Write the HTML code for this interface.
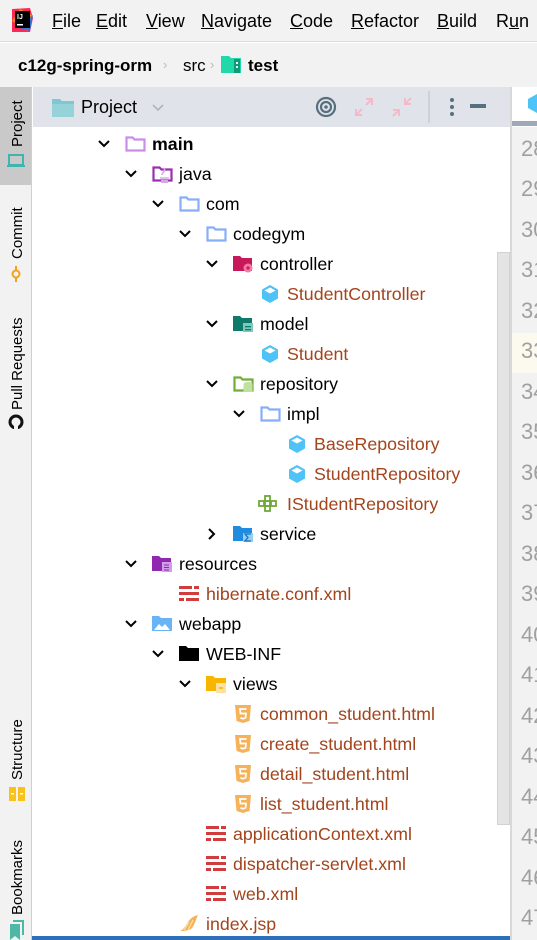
<!DOCTYPE html>
<html><head><meta charset="utf-8">
<style>
*{margin:0;padding:0;box-sizing:border-box}
body{width:537px;height:940px;overflow:hidden;background:#fff;font-family:"Liberation Sans",sans-serif;position:relative;color:#000}
.abs{position:absolute}
.menu{left:0;top:0;width:537px;height:42px;background:#f2f2f2;border-bottom:1px solid #dcdcdc}
.menu span{position:absolute;top:11px;font-size:18px;color:#000}
.menu u{text-decoration:underline}
.crumb{left:0;top:43px;width:537px;height:44px;background:#f2f2f2}
.side{left:0;top:87px;width:32px;height:853px;background:#f2f2f2;border-right:1px solid #d0d0d0}
.vt{position:absolute;transform:rotate(-90deg);transform-origin:left top;font-size:15px;white-space:nowrap;color:#000}
.hdr{left:33px;top:87px;width:477px;height:40px;background:#e0e3ea}
.row{position:absolute;height:30px;font-size:17.8px;line-height:30px;white-space:nowrap}
.row svg{position:absolute;top:5px}
.chev{position:absolute;top:0;font-size:15px}
.f{color:#a2441c}
.gut{left:511px;top:127px;width:26px;height:813px;background:#f2f2f2;border-left:1px solid #d8d8d8;overflow:hidden}
.gut div{position:absolute;left:9px;font-size:22px;color:#a0a0a0}
</style></head><body>
<div class="abs menu">
  <svg class="abs" style="left:10px;top:7px" width="24" height="26" viewBox="0 0 24 26"><path d="M2 2l18 -1 3 10-3 14-18 0z" fill="#fe2857"/><path d="M2 14l8-12 12 6-4 16z" fill="#fc801d"/><path d="M6 20l14 4 3-16z" fill="#087cfa" opacity=".8"/><rect x="5" y="4" width="15" height="17" fill="#000"/><text x="7" y="12" font-size="7" fill="#fff" font-family="Liberation Sans" font-weight="bold">IJ</text><rect x="7" y="17" width="6" height="1.5" fill="#fff"/></svg>
  <span style="left:52px"><u>F</u>ile</span>
  <span style="left:96px"><u>E</u>dit</span>
  <span style="left:146px"><u>V</u>iew</span>
  <span style="left:201px"><u>N</u>avigate</span>
  <span style="left:290px"><u>C</u>ode</span>
  <span style="left:351px"><u>R</u>efactor</span>
  <span style="left:437px"><u>B</u>uild</span>
  <span style="left:496px">R<u>u</u>n</span>
</div>
<div class="abs crumb">
  <span class="abs" style="left:18px;top:13px;font-size:17px;font-weight:bold">c12g-spring-orm</span>
  <span class="abs" style="left:163px;top:14px;font-size:13px;color:#bbb">›</span>
  <span class="abs" style="left:183px;top:13px;font-size:17px">src</span>
  <span class="abs" style="left:210px;top:14px;font-size:13px;color:#bbb">›</span>
  <svg class="abs" style="left:221px;top:12px" width="22" height="20" viewBox="0 0 22 20"><path d="M0 1h8l2 2h10v15H0z" fill="#21d8a8"/><rect x="13" y="4" width="6" height="14" fill="#0e9c78"/><rect x="15" y="7" width="2" height="2" fill="#fff"/><rect x="15" y="11" width="2" height="2" fill="#fff"/></svg>
  <span class="abs" style="left:248px;top:13px;font-size:17px;font-weight:bold">test</span>
</div>
<div class="abs side">
  <div class="abs" style="left:0;top:0;width:31px;height:98px;background:#c9c9c9"></div>
  <div class="vt" style="left:9px;top:60px">Project</div>
  <svg class="abs" style="left:7px;top:66px" width="18" height="16" viewBox="0 0 18 16"><rect x="2" y="2" width="14" height="10" fill="none" stroke="#3fb5b0" stroke-width="2"/><rect x="0" y="12" width="18" height="2" fill="#3fb5b0"/></svg>
  <div class="vt" style="left:9px;top:172px">Commit</div>
  <svg class="abs" style="left:9px;top:179px" width="14" height="16" viewBox="0 0 14 16"><circle cx="7" cy="8" r="3.5" fill="none" stroke="#f4a21c" stroke-width="2"/><path d="M7 0v4M7 12v4" stroke="#f4a21c" stroke-width="2"/></svg>
  <div class="vt" style="left:9px;top:323px">Pull Requests</div>
  <svg class="abs" style="left:8px;top:327px" width="16" height="16" viewBox="0 0 16 16"><circle cx="8" cy="8" r="6" fill="none" stroke="#111" stroke-width="3"/><rect x="6" y="12" width="4" height="4" fill="#f2f2f2"/></svg>
  <div class="vt" style="left:9px;top:693px">Structure</div>
  <svg class="abs" style="left:9px;top:700px" width="16" height="14" viewBox="0 0 16 14"><rect x="0" y="0" width="7" height="14" fill="#f9c21a"/><rect x="9" y="0" width="7" height="14" fill="#f9c21a"/><rect x="2" y="6" width="3" height="1.5" fill="#fff"/><rect x="11" y="6" width="3" height="1.5" fill="#fff"/></svg>
  <div class="vt" style="left:9px;top:828px">Bookmarks</div>
  <svg class="abs" style="left:8px;top:833px" width="18" height="20" viewBox="0 0 18 20"><path d="M2 4h10v16l-5-4-5 4z" fill="#4fb7a6"/><path d="M5 1h10v14" fill="none" stroke="#4fb7a6" stroke-width="2"/></svg>
</div>
<div class="abs hdr">
  <svg class="abs" style="left:18px;top:9px" width="24" height="22" viewBox="0 0 24 22"><path d="M1 3h8l2 2h12v16H1z" fill="#80c8cf"/><path d="M1 8h22v13H1z" fill="#95d3d9"/></svg>
  <span class="abs" style="left:48px;top:10px;font-size:18px">Project</span>
  <svg class="abs" style="left:118px;top:16px" width="14" height="9"><path d="M2 2l5 5 5-5" fill="none" stroke="#b0b4bb" stroke-width="1.6"/></svg>
  <svg class="abs" style="left:282px;top:9px" width="22" height="22" viewBox="0 0 22 22"><circle cx="11" cy="11" r="9" fill="none" stroke="#56707d" stroke-width="2.2"/><circle cx="11" cy="11" r="5" fill="none" stroke="#56707d" stroke-width="2.2"/><circle cx="11" cy="11" r="1.8" fill="#56707d"/></svg>
  <svg class="abs" style="left:320px;top:9px" width="22" height="22" viewBox="0 0 22 22"><path d="M13 3h6v6M19 3l-6 6M9 19H3v-6M3 19l6-6" fill="none" stroke="#f7b8c8" stroke-width="2"/></svg>
  <svg class="abs" style="left:358px;top:9px" width="22" height="22" viewBox="0 0 22 22"><path d="M14 2v6h6M14 8l6-6M8 20v-6H2M8 14l-6 6" fill="none" stroke="#f7b8c8" stroke-width="2"/></svg>
  <div class="abs" style="left:395px;top:4px;width:2px;height:32px;background:#cfd1d6"></div>
  <svg class="abs" style="left:416px;top:10px" width="6" height="20"><circle cx="3" cy="3" r="2" fill="#56707d"/><circle cx="3" cy="10" r="2" fill="#56707d"/><circle cx="3" cy="17" r="2" fill="#56707d"/></svg>
  <div class="abs" style="left:437px;top:17px;width:16px;height:4px;background:#56707d"></div>
</div>
<div class="abs" style="left:510px;top:87px;width:2px;height:853px;background:#d8d8d8"></div>
<div class="abs" style="left:512px;top:87px;width:25px;height:34px;background:#fff"></div>
<svg class="abs" style="left:526px;top:93px" width="11" height="20" viewBox="0 0 11 20"><path d="M11 1L2 6v9l9 5z" fill="#4dc3f7"/></svg>
<div class="abs" style="left:512px;top:121px;width:25px;height:5px;background:#a0a8b8"></div>
<div class="abs gut">
  <div class="abs" style="left:0;top:206px;width:26px;height:40px;background:#fcfaee"></div>
  <div style="top:9px">28</div><div style="top:49px">29</div><div style="top:90px">30</div><div style="top:130px">31</div><div style="top:171px">32</div><div style="top:211px">33</div><div style="top:252px">34</div><div style="top:292px">35</div><div style="top:333px">36</div><div style="top:373px">37</div><div style="top:414px">38</div><div style="top:454px">39</div><div style="top:495px">40</div><div style="top:535px">41</div><div style="top:576px">42</div><div style="top:616px">43</div><div style="top:657px">44</div><div style="top:697px">45</div><div style="top:738px">46</div><div style="top:778px">47</div>
</div>
<div class="abs" style="left:497px;top:252px;width:13px;height:573px;background:#e4e4e4;border:1px solid #d2d2d2"></div>
<div class="abs" style="left:32px;top:936px;width:478px;height:4px;background:#2d6fb8"></div>

<div id="tree">
<div class="row" style="top:129px;left:0;width:497px">
 <svg class="chev" style="left:97px;top:10px" width="14" height="10"><path d="M2 2l5 5 5-5" fill="none" stroke="#000" stroke-width="2"/></svg>
 <svg style="left:125px" width="21" height="20" viewBox="0 0 21 20"><path d="M1.5 3.5h6l2 2h10v11h-18z" fill="none" stroke="#c98ee8" stroke-width="2.2"/></svg>
 <span class="abs" style="left:152px;font-weight:bold">main</span></div>

<div class="row" style="top:159px;left:0;width:497px">
 <svg class="chev" style="left:124px;top:10px" width="14" height="10"><path d="M2 2l5 5 5-5" fill="none" stroke="#000" stroke-width="2"/></svg>
 <svg style="left:152px" width="21" height="20" viewBox="0 0 21 20"><path d="M1.5 3.5h6l2 2h10v11h-18z" fill="none" stroke="#9a2fb0" stroke-width="2.2"/><path d="M8 14h9M10 11c0-3 4-3 2-7" fill="none" stroke="#d8a8e6" stroke-width="1.6"/><rect x="9" y="16" width="7" height="3" fill="#d8a8e6"/></svg>
 <span class="abs" style="left:179px">java</span></div>

<div class="row" style="top:189px;left:0;width:497px">
 <svg class="chev" style="left:151px;top:10px" width="14" height="10"><path d="M2 2l5 5 5-5" fill="none" stroke="#000" stroke-width="2"/></svg>
 <svg style="left:179px" width="21" height="20" viewBox="0 0 21 20"><path d="M1.5 3.5h6l2 2h10v11h-18z" fill="none" stroke="#88aef8" stroke-width="2.2"/></svg>
 <span class="abs" style="left:206px">com</span></div>

<div class="row" style="top:219px;left:0;width:497px">
 <svg class="chev" style="left:178px;top:10px" width="14" height="10"><path d="M2 2l5 5 5-5" fill="none" stroke="#000" stroke-width="2"/></svg>
 <svg style="left:206px" width="21" height="20" viewBox="0 0 21 20"><path d="M1.5 3.5h6l2 2h10v11h-18z" fill="none" stroke="#88aef8" stroke-width="2.2"/></svg>
 <span class="abs" style="left:233px">codegym</span></div>

<div class="row" style="top:249px;left:0;width:497px">
 <svg class="chev" style="left:205px;top:10px" width="14" height="10"><path d="M2 2l5 5 5-5" fill="none" stroke="#000" stroke-width="2"/></svg>
 <svg style="left:233px" width="21" height="20" viewBox="0 0 21 20"><path d="M0 2h7l2 2h10v13H0z" fill="#c8185a"/><circle cx="15" cy="14" r="4.5" fill="#f27ba6"/><circle cx="15" cy="14" r="1.6" fill="#c8185a"/></svg>
 <span class="abs" style="left:260px">controller</span></div>

<div class="row" style="top:279px;left:0;width:497px">
 <svg style="left:260px" width="20" height="20" viewBox="0 0 20 20"><path d="M10 1l8 4.5v9L10 19l-8-4.5v-9z" fill="#4dc3f7"/><path d="M10 3.5l5.5 3L10 9.5 4.5 6.5z" fill="#fff"/></svg>
 <span class="abs f" style="left:287px">StudentController</span></div>

<div class="row" style="top:309px;left:0;width:497px">
 <svg class="chev" style="left:205px;top:10px" width="14" height="10"><path d="M2 2l5 5 5-5" fill="none" stroke="#000" stroke-width="2"/></svg>
 <svg style="left:233px" width="21" height="20" viewBox="0 0 21 20"><path d="M0 2h7l2 2h10v13H0z" fill="#0f7a6a"/><rect x="10" y="9" width="10" height="9" fill="#7dc9bb"/><rect x="12" y="12" width="6" height="1.3" fill="#0f7a6a"/><rect x="12" y="15" width="6" height="1.3" fill="#0f7a6a"/></svg>
 <span class="abs" style="left:260px">model</span></div>

<div class="row" style="top:339px;left:0;width:497px">
 <svg style="left:260px" width="20" height="20" viewBox="0 0 20 20"><path d="M10 1l8 4.5v9L10 19l-8-4.5v-9z" fill="#4dc3f7"/><path d="M10 3.5l5.5 3L10 9.5 4.5 6.5z" fill="#fff"/></svg>
 <span class="abs f" style="left:287px">Student</span></div>

<div class="row" style="top:369px;left:0;width:497px">
 <svg class="chev" style="left:205px;top:10px" width="14" height="10"><path d="M2 2l5 5 5-5" fill="none" stroke="#000" stroke-width="2"/></svg>
 <svg style="left:233px" width="21" height="20" viewBox="0 0 21 20"><path d="M1.5 3.5h6l2 2h10v11h-18z" fill="none" stroke="#72ac3a" stroke-width="2.2"/><ellipse cx="15" cy="10" rx="4.5" ry="2" fill="#c0e0a0"/><rect x="10.5" y="10" width="9" height="8" fill="#c0e0a0"/></svg>
 <span class="abs" style="left:260px">repository</span></div>

<div class="row" style="top:399px;left:0;width:497px">
 <svg class="chev" style="left:232px;top:10px" width="14" height="10"><path d="M2 2l5 5 5-5" fill="none" stroke="#000" stroke-width="2"/></svg>
 <svg style="left:260px" width="21" height="20" viewBox="0 0 21 20"><path d="M1.5 3.5h6l2 2h10v11h-18z" fill="none" stroke="#88aef8" stroke-width="2.2"/></svg>
 <span class="abs" style="left:287px">impl</span></div>

<div class="row" style="top:429px;left:0;width:497px">
 <svg style="left:287px" width="20" height="20" viewBox="0 0 20 20"><path d="M10 1l8 4.5v9L10 19l-8-4.5v-9z" fill="#4dc3f7"/><path d="M10 3.5l5.5 3L10 9.5 4.5 6.5z" fill="#fff"/></svg>
 <span class="abs f" style="left:314px">BaseRepository</span></div>

<div class="row" style="top:459px;left:0;width:497px">
 <svg style="left:287px" width="20" height="20" viewBox="0 0 20 20"><path d="M10 1l8 4.5v9L10 19l-8-4.5v-9z" fill="#4dc3f7"/><path d="M10 3.5l5.5 3L10 9.5 4.5 6.5z" fill="#fff"/></svg>
 <span class="abs f" style="left:314px">StudentRepository</span></div>

<div class="row" style="top:489px;left:0;width:497px">
 <svg style="left:258px" width="22" height="18" viewBox="0 0 22 18"><g fill="none" stroke="#6fa83a" stroke-width="1.8"><rect x="7" y="2" width="5" height="5"/><rect x="1" y="7" width="5" height="5"/><rect x="7" y="7" width="5" height="5"/><rect x="13" y="7" width="5" height="5"/><rect x="7" y="12" width="5" height="5"/></g></svg>
 <span class="abs f" style="left:287px">IStudentRepository</span></div>

<div class="row" style="top:519px;left:0;width:497px">
 <svg class="chev" style="left:207px;top:8px" width="10" height="14"><path d="M2 2l5 5-5 5" fill="none" stroke="#000" stroke-width="2"/></svg>
 <svg style="left:233px" width="21" height="20" viewBox="0 0 21 20"><path d="M0 2h7l2 2h10v13H0z" fill="#1f8ce0"/><rect x="10" y="9" width="10" height="9" fill="#8fd0f5"/><path d="M18 10h-6l3 3.5-3 3.5h6" fill="none" stroke="#1f6fb8" stroke-width="1.3"/></svg>
 <span class="abs" style="left:260px">service</span></div>

<div class="row" style="top:549px;left:0;width:497px">
 <svg class="chev" style="left:124px;top:10px" width="14" height="10"><path d="M2 2l5 5 5-5" fill="none" stroke="#000" stroke-width="2"/></svg>
 <svg style="left:152px" width="21" height="20" viewBox="0 0 21 20"><path d="M0 2h7l2 2h10v13H0z" fill="#8f2ab0"/><rect x="10" y="8" width="10" height="10" fill="#d39ce8"/><path d="M12 11h5M12 13.5h5M12 16h5" stroke="#8f2ab0" stroke-width="1"/></svg>
 <span class="abs" style="left:179px">resources</span></div>

<div class="row" style="top:579px;left:0;width:497px">
 <svg style="left:179px" width="21" height="20" viewBox="0 0 21 20"><g fill="#d13c3c"><rect x="0" y="2" width="13" height="3"/><rect x="15" y="2" width="5" height="3"/><rect x="0" y="8" width="20" height="3"/><rect x="0" y="14" width="5" height="3"/><rect x="7" y="14" width="13" height="3"/></g></svg>
 <span class="abs f" style="left:206px">hibernate.conf.xml</span></div>

<div class="row" style="top:609px;left:0;width:497px">
 <svg class="chev" style="left:124px;top:10px" width="14" height="10"><path d="M2 2l5 5 5-5" fill="none" stroke="#000" stroke-width="2"/></svg>
 <svg style="left:152px" width="21" height="20" viewBox="0 0 21 20"><path d="M0 2h7l2 2h11v13H0z" fill="#6ab4f5"/><path d="M2 16l5-6 3 3 3-3 5 6z" fill="#fff"/></svg>
 <span class="abs" style="left:179px">webapp</span></div>

<div class="row" style="top:639px;left:0;width:497px">
 <svg class="chev" style="left:151px;top:10px" width="14" height="10"><path d="M2 2l5 5 5-5" fill="none" stroke="#000" stroke-width="2"/></svg>
 <svg style="left:179px" width="21" height="20" viewBox="0 0 21 20"><path d="M0 2h7l2 2h11v13H0z" fill="#000"/></svg>
 <span class="abs" style="left:206px">WEB-INF</span></div>

<div class="row" style="top:669px;left:0;width:497px">
 <svg class="chev" style="left:178px;top:10px" width="14" height="10"><path d="M2 2l5 5 5-5" fill="none" stroke="#000" stroke-width="2"/></svg>
 <svg style="left:206px" width="21" height="20" viewBox="0 0 21 20"><path d="M0 2h7l2 2h11v13H0z" fill="#f7b500"/><rect x="10" y="9" width="10" height="10" fill="#fde1a0"/><path d="M13 14h4" stroke="#f7b500" stroke-width="1.5"/></svg>
 <span class="abs" style="left:233px">views</span></div>

<div class="row" style="top:699px;left:0;width:497px">
 <svg style="left:233px" width="20" height="20" viewBox="0 0 20 20"><path d="M2 1h16l-1.5 16L10 19l-6.5-2z" fill="#f6b25a"/><path d="M13.5 5H7l.4 4.5h5.6l-.4 4.3L10 14.7l-2.6-.9" fill="none" stroke="#fff" stroke-width="1.7"/></svg>
 <span class="abs f" style="left:260px">common_student.html</span></div>

<div class="row" style="top:729px;left:0;width:497px">
 <svg style="left:233px" width="20" height="20" viewBox="0 0 20 20"><path d="M2 1h16l-1.5 16L10 19l-6.5-2z" fill="#f6b25a"/><path d="M13.5 5H7l.4 4.5h5.6l-.4 4.3L10 14.7l-2.6-.9" fill="none" stroke="#fff" stroke-width="1.7"/></svg>
 <span class="abs f" style="left:260px">create_student.html</span></div>

<div class="row" style="top:759px;left:0;width:497px">
 <svg style="left:233px" width="20" height="20" viewBox="0 0 20 20"><path d="M2 1h16l-1.5 16L10 19l-6.5-2z" fill="#f6b25a"/><path d="M13.5 5H7l.4 4.5h5.6l-.4 4.3L10 14.7l-2.6-.9" fill="none" stroke="#fff" stroke-width="1.7"/></svg>
 <span class="abs f" style="left:260px">detail_student.html</span></div>

<div class="row" style="top:789px;left:0;width:497px">
 <svg style="left:233px" width="20" height="20" viewBox="0 0 20 20"><path d="M2 1h16l-1.5 16L10 19l-6.5-2z" fill="#f6b25a"/><path d="M13.5 5H7l.4 4.5h5.6l-.4 4.3L10 14.7l-2.6-.9" fill="none" stroke="#fff" stroke-width="1.7"/></svg>
 <span class="abs f" style="left:260px">list_student.html</span></div>

<div class="row" style="top:819px;left:0;width:497px">
 <svg style="left:206px" width="21" height="20" viewBox="0 0 21 20"><g fill="#d13c3c"><rect x="0" y="2" width="13" height="3"/><rect x="15" y="2" width="5" height="3"/><rect x="0" y="8" width="20" height="3"/><rect x="0" y="14" width="5" height="3"/><rect x="7" y="14" width="13" height="3"/></g></svg>
 <span class="abs f" style="left:233px">applicationContext.xml</span></div>

<div class="row" style="top:849px;left:0;width:497px">
 <svg style="left:206px" width="21" height="20" viewBox="0 0 21 20"><g fill="#d13c3c"><rect x="0" y="2" width="13" height="3"/><rect x="15" y="2" width="5" height="3"/><rect x="0" y="8" width="20" height="3"/><rect x="0" y="14" width="5" height="3"/><rect x="7" y="14" width="13" height="3"/></g></svg>
 <span class="abs f" style="left:233px">dispatcher-servlet.xml</span></div>

<div class="row" style="top:879px;left:0;width:497px">
 <svg style="left:206px" width="21" height="20" viewBox="0 0 21 20"><g fill="#d13c3c"><rect x="0" y="2" width="13" height="3"/><rect x="15" y="2" width="5" height="3"/><rect x="0" y="8" width="20" height="3"/><rect x="0" y="14" width="5" height="3"/><rect x="7" y="14" width="13" height="3"/></g></svg>
 <span class="abs f" style="left:233px">web.xml</span></div>

<div class="row" style="top:909px;left:0;width:497px">
 <svg style="left:179px" width="21" height="20" viewBox="0 0 21 20"><path d="M1 17c3-1 5-4 8-9 2-3 5-6 10-7-2 4-3 9-6 13-2 2-6 3-12 3z" fill="#f6b25a"/><path d="M5 16l5-8M9 16l5-10" stroke="#fde1a0" stroke-width="1.2"/></svg>
 <span class="abs f" style="left:206px">index.jsp</span></div>
</div>
</body></html>
